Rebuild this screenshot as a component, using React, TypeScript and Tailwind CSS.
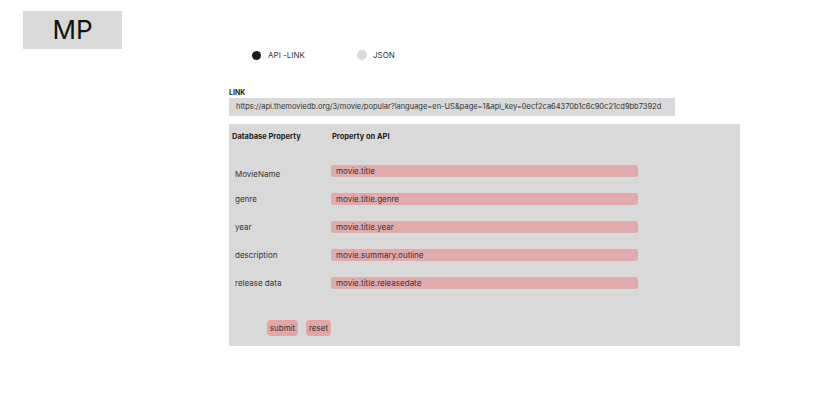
import React from "react";

const rows = [
  { name: "MovieName", api: "movie.title", shift: true },
  { name: "genre", api: "movie.title.genre" },
  { name: "year", api: "movie.title.year" },
  { name: "description", api: "movie.summary.outline" },
  { name: "release data", api: "movie.title.releasedate" },
];

export default function App() {
  return (
    <div className="w-[840px] h-[416px] bg-white text-[#222] font-['Inter',_'Liberation_Sans',_sans-serif] flex flex-col">
      <div className="pl-[23px] pt-[11px]">
        <div className="w-[99px] h-[38px] bg-[#d9d9d9] flex items-center justify-center text-[26px] leading-none text-[#111]">
          MP
        </div>
      </div>

      <div className="ml-[229px] w-[511px] flex flex-col">
        <div className="flex items-center h-[10px] mt-[1px] pl-[23px] text-[8px] text-[#333]">
          <div className="flex items-center gap-[7px] w-[105px]">
            <span className="w-[9px] h-[9px] rounded-full bg-[#1a1a1a]"></span>
            API -LINK
          </div>
          <div className="flex items-center gap-[6px]">
            <span className="w-[10px] h-[10px] rounded-full bg-[#d9d9d9]"></span>
            JSON
          </div>
        </div>

        <div className="mt-[28px] text-[7px] font-bold leading-[9px]">LINK</div>
        <div className="mt-[1px] w-[446px] h-[18px] bg-[#d9d9d9] flex items-center pl-[7px] text-[7.5px] text-[#333] whitespace-nowrap">
          https://api.themoviedb.org/3/movie/popular?language=en-US&amp;page=1&amp;api_key=0ecf2ca64370b1c6c90c21cd9bb7392d
        </div>

        <div className="mt-[8px] bg-[#d9d9d9] pt-[8px] pb-[10px] flex flex-col">
          <div className="flex h-[9px] items-center text-[7.5px] font-bold">
            <div className="w-[103px] pl-[3px]">Database Property</div>
            <div>Property on API</div>
          </div>
          <div className="mt-[24px] flex flex-col gap-[16px]">
            {rows.map((r) => (
              <div key={r.name} className="flex items-center h-[12px] text-[8px] text-[#333]">
                <div className={"w-[102px] pl-[6px] " + (r.shift ? "mt-[5px]" : "")}>{r.name}</div>
                <div className="w-[307px] h-[12px] rounded-[2px] bg-[#e2abab] flex items-center pl-[5px] text-[#333]">
                  {r.api}
                </div>
              </div>
            ))}
          </div>
          <div className="mt-[31px] ml-[38px] flex gap-[8px] text-[8px] text-[#333]">
            <button className="w-[31px] h-[16px] rounded-[4px] bg-[#e6a4a4] flex items-center justify-center">
              submit
            </button>
            <button className="w-[25px] h-[16px] rounded-[4px] bg-[#e6a4a4] flex items-center justify-center">
              reset
            </button>
          </div>
        </div>
      </div>
    </div>
  );
}
